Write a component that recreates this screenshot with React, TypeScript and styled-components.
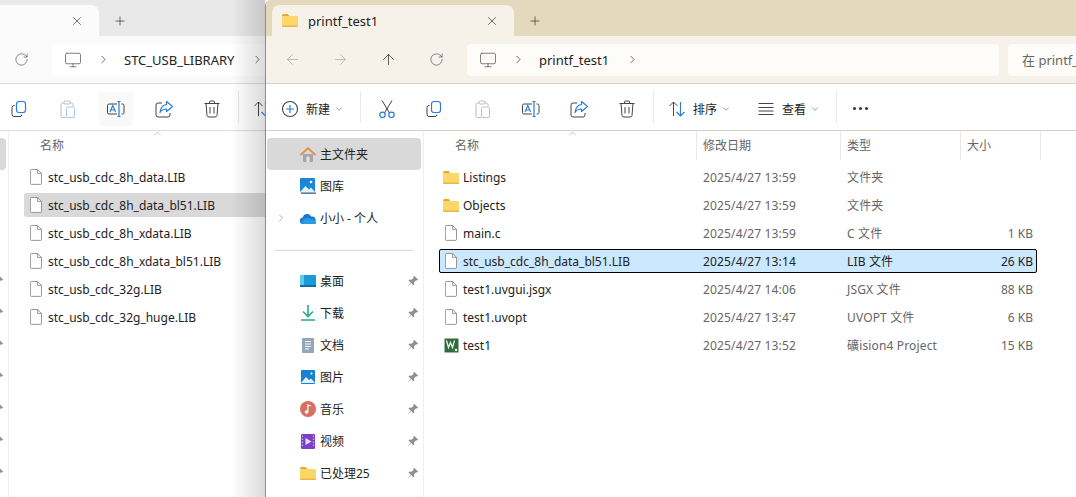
import React from "react";
import styled, { createGlobalStyle, ThemeProvider } from "styled-components";
import { ArrowLeft, ArrowRight, ArrowUp, ChevronDown, ChevronRight, ChevronUp, Monitor, Plus, RotateCw, X } from "lucide-react";

const frontTheme = {
    title: "#e4d9bc",
    tab: "#f6f2ea",
    nav: "#f6f2ea",
    box: "#fdfcf9",
    line: "#d8d3c4",
    selected: "#cce8ff",
    selectedBorder: "#000",
};
const backTheme = {
    title: "#e9e9e9",
    tab: "#fbfbfb",
    nav: "#fbfbfb",
    box: "#ffffff",
    line: "#dcdcdc",
    selected: "#d9d9d9",
    selectedBorder: "#d9d9d9",
};

const GlobalStyle = createGlobalStyle`
html, body {
    margin: 0;
    padding: 0;
    background: #fff;
}
body {
    font-family: "Noto Sans", "Noto Sans CJK SC", sans-serif;
    font-size: 12px;
    color: #222;
}
`;

const Copy = () => (
    <svg width="20" height="20" viewBox="0 0 20 20" fill="none">
        <path d="M4.500 6.500h-.5a2 2 0 0 0-2 2v7a2 2 0 0 0 2 2h6a2 2 0 0 0 2-2" stroke="#444" />
        <rect x="6.500" y="2.500" width="9" height="11" rx="2.500" stroke="#2b7cd3" strokeWidth="1.200" />
    </svg>
);
const Paste = () => (
    <svg width="20" height="20" viewBox="0 0 20 20" fill="none">
        <path d="M6 4H4.500A1.500 1.500 0 0 0 3 5.500V17a1.500 1.500 0 0 0 1.500 1.500H8M12 4h1.500A1.500 1.500 0 0 1 15 5.500V7" stroke="#bcbcbc" />
        <rect x="6" y="2" width="6" height="3" rx="1" stroke="#bcbcbc" />
        <rect x="8.500" y="8" width="8" height="10.500" rx="1.500" stroke="#a9c8e6" />
    </svg>
);
const Rename = () => (
    <svg width="20" height="20" viewBox="0 0 20 20" fill="none">
        <path d="M11 5H3a1.500 1.500 0 0 0-1.500 1.500v7A1.500 1.500 0 0 0 3 15h8M15.500 5h1a1.500 1.500 0 0 1 1.500 1.500v7a1.500 1.500 0 0 1-1.500 1.500h-1" stroke="#444" />
        <path d="M11.500 2.500h3M13 2.500v15M11.500 17.500h3" stroke="#2b7cd3" strokeWidth="1.200" />
        <path d="M4 13l2.800-6.500L9.600 13M5 11h3.700" stroke="#2b7cd3" strokeWidth="1.100" />
    </svg>
);
const Share = () => (
    <svg width="20" height="20" viewBox="0 0 20 20" fill="none">
        <path d="M8 4H4a2 2 0 0 0-2 2v10a2 2 0 0 0 2 2h10a2 2 0 0 0 2-2v-2" stroke="#444" />
        <path d="M12.500 2.500l6 5-6 5V10c-3 0-5 1-6.500 3.500C6.500 9.500 8.500 6 12.500 5.500z" stroke="#2b7cd3" strokeWidth="1.200" strokeLinejoin="round" />
    </svg>
);
const Trash = () => (
    <svg width="20" height="20" viewBox="0 0 20 20" fill="none" stroke="#444">
        <path d="M2.500 4.500h15M7.500 4.500V3a1 1 0 0 1 1-1h3a1 1 0 0 1 1 1v1.500" />
        <path d="M4 4.500l1 12a2 2 0 0 0 2 1.500h6a2 2 0 0 0 2-1.500l1-12M8 8v6.500M12 8v6.500" />
    </svg>
);
const PlusCircle = () => (
    <svg width="18" height="18" viewBox="0 0 18 18" fill="none">
        <circle cx="9" cy="9" r="7.500" stroke="#444" strokeWidth="1.100" />
        <path d="M9 5v8M5 9h8" stroke="#2b7cd3" strokeWidth="1.200" />
    </svg>
);
const Scissors = () => (
    <svg width="20" height="20" viewBox="0 0 20 20" fill="none">
        <path d="M5 1.500l7.500 12.500M15 1.500L7.500 14" stroke="#444" />
        <circle cx="5.500" cy="15.800" r="2.700" stroke="#2b7cd3" strokeWidth="1.200" />
        <circle cx="14.500" cy="15.800" r="2.700" stroke="#2b7cd3" strokeWidth="1.200" />
    </svg>
);
const SortIcon = () => (
    <svg width="18" height="18" viewBox="0 0 18 18" fill="none">
        <path d="M5.500 16V2M1.500 6l4-4 4 4" stroke="#444" />
        <path d="M12.500 2v14M8.500 12l4 4 4-4" stroke="#2b7cd3" strokeWidth="1.200" />
    </svg>
);
const ViewIcon = () => (
    <svg width="18" height="18" viewBox="0 0 18 18" fill="none" stroke="#444">
        <path d="M1.500 3.500h15M1.500 7.500h15M1.500 11h15M1.500 14.500h15" />
    </svg>
);
const Folder = () => (
    <svg width="16" height="13" viewBox="0 0 16 13">
        <path d="M0 1.500A1.500 1.500 0 0 1 1.500 0h4l2 2H0z" fill="#e9a92c" />
        <rect x="0" y="2" width="16" height="11" rx="1.200" fill="#fbd669" />
        <rect x="0" y="11.500" width="16" height="1.500" rx=".7" fill="#eeb544" />
    </svg>
);
const FileIcon = () => (
    <svg width="12" height="16" viewBox="0 0 12 16" fill="#fff" stroke="#7d7d7d" strokeWidth=".8">
        <path d="M1.400.5h6.200l3.900 3.900v10a1 1 0 0 1-1 1H1.400a1 1 0 0 1-1-1V1.500a1 1 0 0 1 1-1z" />
        <path d="M7.600.5v3.900h3.900" fill="none" />
    </svg>
);
const KeilIcon = () => (
    <svg width="15" height="15" viewBox="0 0 15 15">
        <rect x=".5" y=".5" width="14" height="14" rx="1" fill="#2f6b3d" stroke="#9fb5a5" />
        <path d="M2.500 2.500l2 7 2-5 2 5 2-7" fill="none" stroke="#e8f2ea" strokeWidth="1.300" />
        <circle cx="12" cy="12" r="1.300" fill="#e8f2ea" />
    </svg>
);
const Pin = () => (
    <svg width="12" height="12" viewBox="0 0 12 12" fill="#8f8f8f">
        <path d="M7.200.8l4 4-1 .6-1.100-.2-2 2 .2 2.200-.9.900-2.300-2.300L1.200 11 .9 10.700l2.900-3L1.500 5.400l.9-.9 2.200.2 2-2-.2-1.100z" />
    </svg>
);
const HomeIcon = () => (
    <svg width="18" height="16" viewBox="0 0 18 16">
        <path d="M4 8h10v7a1 1 0 0 1-1 1H5a1 1 0 0 1-1-1z" fill="#a6a6a6" />
        <rect x="7.500" y="10.500" width="3" height="5.500" fill="#e1e1e1" />
        <path d="M9 1L.8 8.500l1.200 1.200L9 3.500l7 6.200 1.200-1.200z" fill="#e08b3e" />
    </svg>
);
const GalleryIcon = () => (
    <svg width="16" height="16" viewBox="0 0 16 16">
        <rect width="15" height="14.500" rx="1" fill="#1d86d6" />
        <path d="M0 14l5.500-6 3.500 3.500L11 9.500l4 4.500v.5H0z" fill="#dff1fc" />
        <circle cx="11" cy="4" r="1.300" fill="#fff" />
        <rect x="1" y="14.500" width="15" height="1.500" fill="#5f7f9c" />
    </svg>
);
const CloudIcon = () => (
    <svg width="16" height="11" viewBox="0 0 16 11">
        <path d="M3.300 11A3.200 3.200 0 0 1 2.800 4.600 4.500 4.500 0 0 1 11.200 3.500 3.800 3.800 0 0 1 12.500 11z" fill="#1a78d0" />
        <path d="M3.300 11a2.500 2.500 0 0 1 .5-4.500c2-2 6.500-2 7.500 0 2-.8 4.500.5 4.700 4.500z" fill="#2b9be6" />
    </svg>
);
const DesktopIcon = () => (
    <svg width="16" height="12" viewBox="0 0 16 12">
        <rect width="16" height="11" rx="1" fill="#1c9ad6" />
        <rect y="0" width="4" height="11" fill="#5ec9e8" />
        <rect y="10" width="16" height="2" fill="#0e6ea8" />
    </svg>
);
const DownloadIcon = () => (
    <svg width="14" height="16" viewBox="0 0 14 16" fill="none" stroke="#22ad8c" strokeWidth="1.600">
        <path d="M7 0v11M2 6.500l5 5 5-5M0 15h14" />
    </svg>
);
const DocIcon = () => (
    <svg width="12" height="15" viewBox="0 0 12 15">
        <rect width="12" height="15" rx="1" fill="#93a6bc" />
        <path d="M3 3.500h6M3 6h6M3 8.500h6M3 11h4" stroke="#fff" />
    </svg>
);
const PictureIcon = () => (
    <svg width="14" height="14" viewBox="0 0 14 14">
        <rect width="14" height="14" rx="1" fill="#1a80d0" />
        <path d="M0 13l5-6 3 3 2-1.500 4 4.500H0z" fill="#e4f3fc" />
        <circle cx="10.500" cy="3.500" r="1" fill="#fff" />
    </svg>
);
const MusicIcon = () => (
    <svg width="16" height="16" viewBox="0 0 16 16">
        <circle cx="8" cy="8" r="8" fill="#d6705f" />
        <circle cx="6.500" cy="11" r="1.800" fill="#fff" />
        <path d="M7.800 11V4l3 1" stroke="#fff" strokeWidth="1.300" fill="none" />
    </svg>
);
const VideoIcon = () => (
    <svg width="14" height="15" viewBox="0 0 14 15">
        <rect width="14" height="15" rx="1" fill="#7b3fc8" />
        <path d="M4.500 4v7l6-3.500z" fill="#e8dcfa" />
        <path d="M1.500 1.500v12M12.500 1.500v12" stroke="#c9b0ef" strokeWidth="1.200" strokeDasharray="1.500 1.500" />
    </svg>
);

const navItems = [
    { label: "桌面", icon: <DesktopIcon /> },
    { label: "下载", icon: <DownloadIcon /> },
    { label: "文档", icon: <DocIcon /> },
    { label: "图片", icon: <PictureIcon /> },
    { label: "音乐", icon: <MusicIcon /> },
    { label: "视频", icon: <VideoIcon /> },
    { label: "已处理25", icon: <Folder /> },
];

const frontFiles = [
    { name: "Listings", folder: true, date: "2025/4/27 13:59", type: "文件夹", size: "" },
    { name: "Objects", folder: true, date: "2025/4/27 13:59", type: "文件夹", size: "" },
    { name: "main.c", date: "2025/4/27 13:59", type: "C 文件", size: "1 KB" },
    { name: "stc_usb_cdc_8h_data_bl51.LIB", selected: true, date: "2025/4/27 13:14", type: "LIB 文件", size: "26 KB" },
    { name: "test1.uvgui.jsgx", date: "2025/4/27 14:06", type: "JSGX 文件", size: "88 KB" },
    { name: "test1.uvopt", date: "2025/4/27 13:47", type: "UVOPT 文件", size: "6 KB" },
    { name: "test1", keil: true, date: "2025/4/27 13:52", type: "礦ision4 Project", size: "15 KB" },
];

const backFiles = [
    { name: "stc_usb_cdc_8h_data.LIB" },
    { name: "stc_usb_cdc_8h_data_bl51.LIB", selected: true },
    { name: "stc_usb_cdc_8h_xdata.LIB" },
    { name: "stc_usb_cdc_8h_xdata_bl51.LIB" },
    { name: "stc_usb_cdc_32g.LIB" },
    { name: "stc_usb_cdc_32g_huge.LIB" },
];

type FileItem = { name: string; folder?: boolean; keil?: boolean; selected?: boolean; date?: string; type?: string; size?: string };

// the back window sits mostly behind the front one, so it only gets the words that can be seen
type ExplorerProps = { crumb: string; files: FileItem[]; back?: boolean };

const Explorer: React.FC<ExplorerProps> = ({ crumb, files, back }) => {
    const words = (text: string) => (back ? "" : text);
    return (
        <WindowBody>
            <TitleBar>
                <Tab>
                    <Folder />
                    <span>{words(crumb)}</span>
                    <TabClose><X size={14} strokeWidth={1.2} /></TabClose>
                </Tab>
                <NewTab><Plus size={14} strokeWidth={1.2} /></NewTab>
            </TitleBar>
            <NavBar>
                <NavButton $faded><ArrowLeft size={17} strokeWidth={1} /></NavButton>
                <NavButton $faded><ArrowRight size={17} strokeWidth={1} /></NavButton>
                <NavButton><ArrowUp size={17} strokeWidth={1.1} /></NavButton>
                <NavButton $soft><RotateCw size={15} strokeWidth={1.1} /></NavButton>
                <AddressBox>
                    <Monitor size={18} strokeWidth={1} color="#555" />
                    <ChevronRight size={13} strokeWidth={1.2} />
                    <span>{crumb}</span>
                    <ChevronRight size={13} strokeWidth={1.2} />
                </AddressBox>
                <SearchBox>{words("在 printf_")}</SearchBox>
            </NavBar>
            <Toolbar>
                <LabelButton $first><PlusCircle /><ToolText>{words("新建")}</ToolText><Caret><ChevronDown size={10} /></Caret></LabelButton>
                <ToolDivider />
                <IconButton><Scissors /></IconButton>
                <IconButton><Copy /></IconButton>
                <IconButton><Paste /></IconButton>
                <IconButton $hover={back}><Rename /></IconButton>
                <IconButton><Share /></IconButton>
                <IconButton><Trash /></IconButton>
                <ToolDivider />
                <LabelButton><SortIcon /><ToolText>{words("排序")}</ToolText><Caret><ChevronDown size={10} /></Caret></LabelButton>
                <LabelButton><ViewIcon /><ToolText>{words("查看")}</ToolText><Caret><ChevronDown size={10} /></Caret></LabelButton>
                <ToolDivider />
                <MoreButton><Dot /><Dot /><Dot /></MoreButton>
            </Toolbar>
            <Content>
                <Sidebar>
                    <SideRow $active><SideIcon><HomeIcon /></SideIcon>{words("主文件夹")}</SideRow>
                    <SideRow><SideIcon><GalleryIcon /></SideIcon>{words("图库")}</SideRow>
                    <SideRow>
                        <Expander><ChevronRight size={12} strokeWidth={1.2} /></Expander>
                        <SideIcon><CloudIcon /></SideIcon>{words("小小 - 个人")}
                    </SideRow>
                    <SideSeparator />
                    {navItems.map((item) => (
                        <SideRow key={item.label}>
                            <SideIcon>{item.icon}</SideIcon>
                            {words(item.label)}
                            <PinSlot><Pin /></PinSlot>
                        </SideRow>
                    ))}
                </Sidebar>
                <Main>
                    <SortMark><ChevronUp size={11} strokeWidth={1} /></SortMark>
                    <HeaderRow>
                        <HeaderCell $name>名称</HeaderCell>
                        <HeaderCell>{words("修改日期")}</HeaderCell>
                        <HeaderCell>{words("类型")}</HeaderCell>
                        <HeaderCell $last>{words("大小")}</HeaderCell>
                    </HeaderRow>
                    <FileList>
                        {files.map((f) => (
                            <FileRow key={f.name} $selected={f.selected}>
                                <NameCell>
                                    <FileSlot>{f.folder ? <Folder /> : f.keil ? <KeilIcon /> : <FileIcon />}</FileSlot>
                                    {f.name}
                                </NameCell>
                                <InfoCell $selected={f.selected}>{f.date}</InfoCell>
                                <InfoCell $selected={f.selected}>{f.type}</InfoCell>
                                <SizeCell $selected={f.selected}>{f.size}</SizeCell>
                            </FileRow>
                        ))}
                    </FileList>
                </Main>
            </Content>
        </WindowBody>
    );
};

const App: React.FC = () => (
    <>
        <GlobalStyle />
        <Desktop>
            <BackPane>
                <ThemeProvider theme={backTheme}>
                    <Explorer crumb="STC_USB_LIBRARY" files={backFiles} back />
                </ThemeProvider>
                <WindowShadow />
            </BackPane>
            <FrontPane>
                <ThemeProvider theme={frontTheme}>
                    <Explorer crumb="printf_test1" files={frontFiles} />
                </ThemeProvider>
            </FrontPane>
        </Desktop>
    </>
);

export default App;

const Desktop = styled.div`
display: flex;
width: 1076px;
height: 497px;
overflow: hidden;
background: #fff;
`;

const BackPane = styled.div`
position: relative;
flex: none;
width: 265px;
height: 497px;
overflow: hidden;
`;

const WindowShadow = styled.div`
position: absolute;
top: 0;
right: 0;
width: 34px;
height: 100%;
pointer-events: none;
background: linear-gradient(to right, rgba(0, 0, 0, 0), rgba(0, 0, 0, 0.14));
`;

const FrontPane = styled.div`
flex: none;
width: 811px;
height: 497px;
border-left: 1px solid #8c8c8c;
box-sizing: border-box;
border-top-left-radius: 6px;
overflow: hidden;
`;

const WindowBody = styled.div`
width: 810px;
height: 497px;
display: flex;
flex-direction: column;
background: #fff;
${BackPane} > & {
    margin-left: -149px;
}
`;

const TitleBar = styled.div`
flex: none;
height: 36px;
display: flex;
align-items: flex-end;
box-sizing: border-box;
padding-left: 6px;
background: ${(p) => p.theme.title};
`;

const Tab = styled.div`
width: 242px;
height: 31px;
box-sizing: border-box;
display: flex;
align-items: center;
gap: 10px;
padding: 0 15px 0 10px;
border-radius: 8px 8px 0 0;
background: ${(p) => p.theme.tab};
font-size: 13px;
color: #222;
`;

const TabClose = styled.span`
display: flex;
margin-left: auto;
color: #333;
`;

const NewTab = styled.span`
display: flex;
margin: 0 0 8px 14px;
color: #333;
`;

const NavBar = styled.div`
flex: none;
height: 48px;
box-sizing: border-box;
display: flex;
align-items: center;
padding-left: 2px;
background: ${(p) => p.theme.nav};
border-bottom: 1px solid ${(p) => p.theme.line};
`;

const NavButton = styled.span<{ $faded?: boolean; $soft?: boolean }>`
flex: none;
width: 48px;
display: flex;
justify-content: center;
color: ${(p) => (p.$faded ? "#a8a8a8" : p.$soft ? "#555" : "#333")};
`;

const AddressBox = styled.div`
flex: none;
width: 532px;
height: 32px;
margin-left: 7px;
box-sizing: border-box;
display: flex;
align-items: center;
gap: 15px;
padding-left: 12px;
border-radius: 4px;
background: ${(p) => p.theme.box};
font-size: 13px;
color: #222;
& > span {
    margin-left: -1px;
    margin-right: 2px;
}
`;

const SearchBox = styled.div`
flex: none;
width: 140px;
height: 32px;
margin-left: 9px;
box-sizing: border-box;
padding-left: 14px;
line-height: 32px;
white-space: nowrap;
border-radius: 4px;
background: ${(p) => p.theme.box};
font-size: 13px;
color: #666;
`;

const Toolbar = styled.div`
flex: none;
height: 47px;
box-sizing: border-box;
padding-top: 3px;
display: flex;
align-items: center;
background: #fff;
border-bottom: 1px solid ${(p) => p.theme.line};
`;

const LabelButton = styled.div<{ $first?: boolean }>`
flex: none;
display: flex;
align-items: center;
gap: 7px;
padding: 0 14px 0 ${(p) => (p.$first ? "15px" : "12px")};
color: #222;
`;

const ToolText = styled.span`
width: 24px;
white-space: nowrap;
`;

const Caret = styled.span`
display: flex;
margin-left: -3px;
color: #888;
`;

const ToolDivider = styled.div`
flex: none;
width: 1px;
height: 32px;
margin: -3px 2px 0 2px;
background: #e9e9e9;
`;

const IconButton = styled.div<{ $hover?: boolean }>`
flex: none;
width: 48px;
height: 34px;
display: flex;
align-items: center;
justify-content: center;
background: ${(p) => (p.$hover ? "linear-gradient(to right, transparent 7px, #f9f9f9 7px, #f9f9f9 41px, transparent 41px)" : "transparent")};
`;

const MoreButton = styled.div`
flex: none;
width: 42px;
display: flex;
justify-content: center;
gap: 3px;
`;

const Dot = styled.i`
width: 3px;
height: 3px;
border-radius: 50%;
background: #333;
`;

const Content = styled.div`
flex: 1;
min-height: 0;
display: flex;
`;

const Sidebar = styled.div`
flex: none;
width: 158px;
box-sizing: border-box;
padding: 7px 2px 0 1px;
border-right: 1px solid #efefef;
`;

const SideRow = styled.div<{ $active?: boolean }>`
height: 32px;
display: flex;
align-items: center;
position: relative;
padding-left: 32px;
border-radius: 4px;
background: ${(p) => (p.$active ? "#d9d9d9" : "transparent")};
color: #222;
white-space: nowrap;
`;

const SideIcon = styled.span`
flex: none;
width: 18px;
margin-right: 3px;
display: flex;
justify-content: center;
`;

const Expander = styled.span`
position: absolute;
left: 8px;
display: flex;
color: #777;
`;

const PinSlot = styled.span`
display: flex;
margin-left: auto;
margin-right: 2px;
`;

const SideSeparator = styled.div`
height: 1px;
margin: 16px 8px 14px 8px;
background: #d9d9d9;
`;

const Main = styled.div`
flex: 1;
position: relative;
padding-left: 15px;
`;

const SortMark = styled.span`
position: absolute;
left: 143px;
top: -3px;
display: flex;
color: #777;
`;

const HeaderRow = styled.div`
height: 28px;
display: grid;
grid-template-columns: 257px 144px 120px 81px;
`;

const HeaderCell = styled.div<{ $name?: boolean; $last?: boolean }>`
box-sizing: border-box;
padding-left: ${(p) => (p.$name ? "16px" : "6px")};
line-height: 29px;
color: #666;
border-left: ${(p) => (p.$name ? "none" : "1px solid #e9e9e9")};
border-right: ${(p) => (p.$last ? "1px solid #e9e9e9" : "none")};
`;

const FileList = styled.div`
display: flex;
flex-direction: column;
gap: 4px;
padding-top: 6px;
`;

const FileRow = styled.div<{ $selected?: boolean }>`
width: 598px;
height: 24px;
box-sizing: border-box;
display: grid;
grid-template-columns: 256px 144px 120px 76px;
align-items: center;
border: 1px solid ${(p) => (p.$selected ? p.theme.selectedBorder : "transparent")};
border-radius: 2px;
background: ${(p) => (p.$selected ? p.theme.selected : "transparent")};
`;

const NameCell = styled.div`
display: flex;
align-items: center;
gap: 4px;
padding-left: 3px;
white-space: nowrap;
color: #222;
`;

const FileSlot = styled.span`
flex: none;
width: 16px;
display: flex;
justify-content: center;
`;

const InfoCell = styled.div<{ $selected?: boolean }>`
padding-left: 7px;
white-space: nowrap;
letter-spacing: 0.15px;
color: ${(p) => (p.$selected ? "#222" : "#666")};
`;

const SizeCell = styled.div<{ $selected?: boolean }>`
padding-right: 3px;
text-align: right;
color: ${(p) => (p.$selected ? "#222" : "#666")};
`;
